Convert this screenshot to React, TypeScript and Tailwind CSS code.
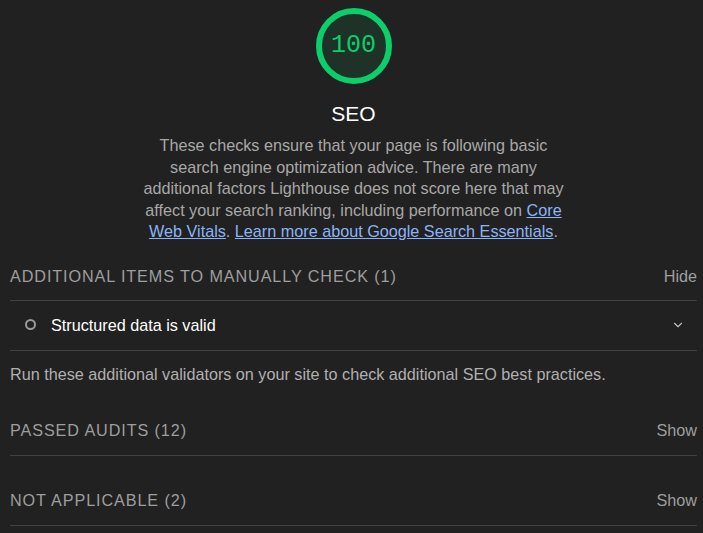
import { ChevronDown } from 'lucide-react';

const groups = [
  { title: 'Passed audits (12)', action: 'Show' },
  { title: 'Not applicable (2)', action: 'Show' },
];

const GroupHeader = ({ title, action }: { title: string; action: string }) => (
  <div className="flex items-center justify-between border-b border-[#424242] pt-3 pb-[13px] leading-6">
    <span className="uppercase tracking-[0.9px] text-[#9e9e9e]">{title}</span>
    <span className="text-[#9e9e9e]">{action}</span>
  </div>
);

const App = () => {
  return (
    <div
      className="min-h-[533px] bg-[#212121] pl-[10px] pr-[6px] text-[16.2px] text-white"
      style={{ fontFamily: '"Liberation Sans", Arial, sans-serif' }}
    >
      <div className="flex flex-col items-center">
        <div className="relative mt-[7px] h-[78px] w-[78px]">
          <svg viewBox="0 0 78 78" className="absolute inset-0 h-full w-full">
            <circle cx="39" cy="39" r="35" fill="#0cce6b" fillOpacity="0.1" stroke="#0cce6b" strokeWidth="6" />
          </svg>
          <div
            className="absolute inset-0 flex items-center justify-center text-[25px] text-[#0cce6b]"
            style={{ fontFamily: '"Liberation Mono", "DejaVu Sans Mono", monospace' }}
          >
            100
          </div>
        </div>
        <h1 className="mt-[17px] text-[21px] leading-6">SEO</h1>
        <p className="mt-[9px] max-w-[430px] text-center leading-[21.5px] text-[#a8a8a8]">
          These checks ensure that your page is following basic search engine optimization advice. There are many
          additional factors Lighthouse does not score here that may affect your search ranking, including performance on{' '}
          <a className="text-[#8ab4f8] underline">Core Web Vitals</a>.{' '}
          <a className="text-[#8ab4f8] underline">Learn more about Google Search Essentials</a>.
        </p>
      </div>

      <div className="mt-[9px]">
        <div className="flex items-center justify-between border-b border-[#424242] pt-3 pb-3 leading-6">
          <span className="uppercase tracking-[0.9px] text-[#9e9e9e]">Additional items to manually check (1)</span>
          <span className="text-[#9e9e9e]">Hide</span>
        </div>
        <div className="flex items-center border-b border-[#424242] pt-3 pb-[13px] leading-6">
          <span className="ml-[15px] h-[11px] w-[11px] rounded-full border-[2.5px] border-[#999999]" />
          <span className="ml-[15px] flex-1">Structured data is valid</span>
          <ChevronDown className="mr-[12px] h-[14px] w-[14px] text-[#bdbdbd]" strokeWidth={2} />
        </div>
        <p className="pt-[11px] leading-6 text-[#b0b0b0]">
          Run these additional validators on your site to check additional SEO best practices.
        </p>
        <div className="mt-[20px] flex flex-col gap-[20px]">
          {groups.map((g) => (
            <GroupHeader key={g.title} title={g.title} action={g.action} />
          ))}
        </div>
      </div>
    </div>
  );
};

export default App;
